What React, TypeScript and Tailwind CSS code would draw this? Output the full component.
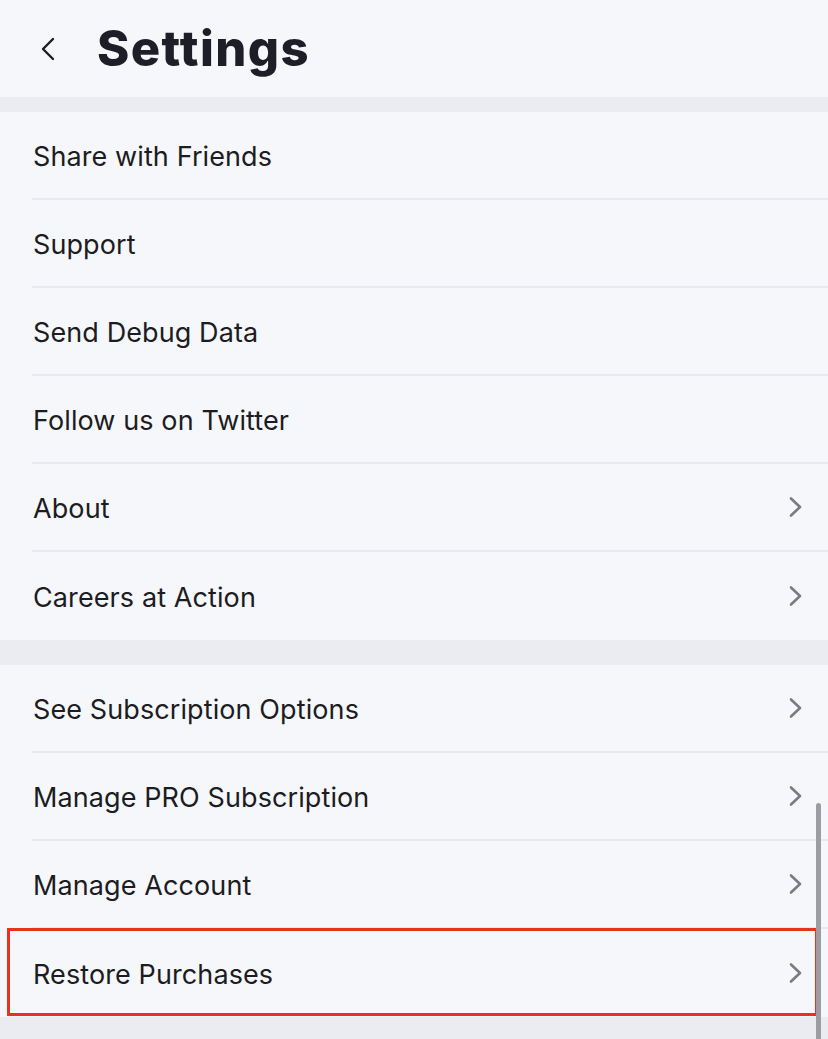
import React from "react";

const Chevron = () => (
  <svg width="16" height="24" viewBox="0 0 16 24" fill="none" className="shrink-0">
    <path d="M3 3.5 L12 12 L3 20.5" stroke="#7a7a80" strokeWidth="2.6" strokeLinecap="round" strokeLinejoin="round" />
  </svg>
);

type Item = { label: string; chevron?: boolean; highlight?: boolean };

const Row = ({ item, last }: { item: Item; last: boolean }) => (
  <div className="relative pl-[32px]">
    {item.highlight && (
      <div className="absolute left-[7px] right-[10px] top-[-1px] bottom-[1px] border-[3px] border-[#e8321e] pointer-events-none" />
    )}
    <div
      className={
        "h-[88px] flex items-center pl-[1px] pr-[24px] " +
        (last ? "" : "border-b-2 border-[#e9e9f0]")
      }
    >
      <span className="flex-1 text-[27px] text-[#1c1c22] tracking-[0.1px] pt-[4px]">{item.label}</span>
      {item.chevron && <Chevron />}
    </div>
  </div>
);

const Section = ({ items }: { items: Item[] }) => (
  <div className="flex flex-col bg-[#f6f7fb]">
    {items.map((it, i) => (
      <Row key={it.label} item={it} last={i === items.length - 1} />
    ))}
  </div>
);

export default function App() {
  const s1: Item[] = [
    { label: "Share with Friends" },
    { label: "Support" },
    { label: "Send Debug Data" },
    { label: "Follow us on Twitter" },
    { label: "About", chevron: true },
    { label: "Careers at Action", chevron: true },
  ];
  const s2: Item[] = [
    { label: "See Subscription Options", chevron: true },
    { label: "Manage PRO Subscription", chevron: true },
    { label: "Manage Account", chevron: true },
    { label: "Restore Purchases", chevron: true, highlight: true },
  ];
  return (
    <div
      className="relative w-[828px] h-[1039px] overflow-hidden bg-[#ebebf2] flex flex-col gap-[15px]"
      style={{ fontFamily: "Inter, 'Noto Sans', sans-serif" }}
    >
      <div className="h-[97px] bg-[#f6f7fb] flex items-center gap-[39px] pl-[38px]">
        <svg width="20" height="28" viewBox="0 0 20 28" fill="none">
          <path d="M15 4 L5 14 L15 24" stroke="#1c1c22" strokeWidth="2.4" strokeLinecap="round" strokeLinejoin="round" />
        </svg>
        <h1 className="text-[49px] font-extrabold text-[#1e1e28] tracking-[1.4px] leading-none">Settings</h1>
      </div>
      <div className="flex flex-col gap-[25px]">
        <Section items={s1} />
        <Section items={s2} />
      </div>
      <div className="absolute right-[7px] top-[803px] w-[5px] h-[260px] rounded-full bg-[#9c9ca2]" />
    </div>
  );
}
